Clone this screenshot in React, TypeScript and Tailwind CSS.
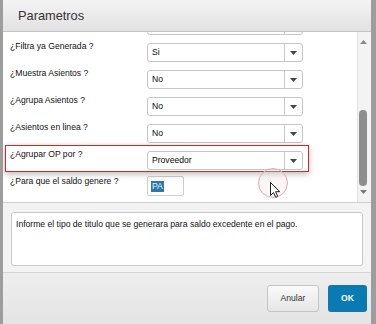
const rows = [
  { label: '', value: '' },
  { label: '¿Filtra ya Generada ?', value: 'Si' },
  { label: '¿Muestra Asientos ?', value: 'No' },
  { label: '¿Agrupa Asientos ?', value: 'No' },
  { label: '¿Asientos en linea ?', value: 'No' },
  { label: '¿Agrupar OP por ?', value: 'Proveedor', highlight: true },
];

function Caret({ up }: { up?: boolean }) {
  return (
    <svg width="7" height="4" viewBox="0 0 7 4">
      <path d={up ? 'M0 4h7L3.5 0z' : 'M0 0h7L3.5 4z'} fill="currentColor" />
    </svg>
  );
}

function SelectBox({ value }: { value: string }) {
  return (
    <div className="mt-[4px] flex h-[19px] w-[156px] items-center rounded-[3px] border border-[#c6c6c6] bg-white">
      <span className="flex-1 pl-[4px] text-[8.6px] leading-none text-[#0a0a0a]">{value}</span>
      <span className="flex h-full w-[18px] items-center justify-center border-l border-[#c9c9c9] text-[#454545]">
        <Caret />
      </span>
    </div>
  );
}

function Row({ label, value, highlight }: { label: string; value: string; highlight?: boolean }) {
  return (
    <div className="relative flex h-[27px] items-start">
      <div className="w-[144px] pl-[7px] pt-[2px] text-[8.6px] leading-[11px] text-[#111]">{label}</div>
      <SelectBox value={value} />
      {highlight && (
        <span className="pointer-events-none absolute -top-[2px] bottom-[2px] left-[2px] right-[48px] border-[1.5px] border-[#d8232a] shadow-[0_2px_6px_rgba(0,0,0,0.28)]" />
      )}
    </div>
  );
}

export default function App() {
  return (
    <div
      className="relative flex h-[324px] w-[376px] flex-col overflow-hidden border-l-[3px] border-r-[5px] border-[#9d9d9d] bg-white"
      style={{ fontFamily: '"Liberation Sans", Arial, sans-serif' }}
    >
      {/* title */}
      <div className="flex h-[32px] shrink-0 items-center border-b border-[#c3c3c3] bg-gradient-to-b from-[#f3f3f3] to-[#e2e2e2] pl-[15px]">
        <span className="text-[12.8px] text-[#333]">Parametros</span>
      </div>

      {/* scrolling params */}
      <div className="flex h-[170px] shrink-0">
        <div className="flex-1 overflow-hidden bg-white">
          <div className="-mt-[20px]">
            {rows.map((r, i) => (
              <Row key={i} label={r.label} value={r.value} highlight={r.highlight} />
            ))}
            <div className="flex h-[27px] items-start">
              <div className="w-[144px] pl-[7px] pt-[2px] text-[8.6px] leading-[11px] text-[#111]">
                ¿Para que el saldo genere ?
              </div>
              <div className="mt-[2px] flex h-[20px] w-[37px] items-center rounded-[2px] border border-[#cfcfcf] bg-white pl-[3px]">
                <span className="bg-[#2b78ad] px-[1px] text-[8.6px] leading-[11px] text-[#e9f3fa]">PA</span>
              </div>
            </div>
          </div>
        </div>
        <div className="flex w-[14px] flex-col border-l border-[#e2e2e2] bg-[#f3f3f3]">
          <div className="flex h-[12px] w-[9px] items-end justify-center pl-[1px] text-[#8a8a8a]">
            <Caret up />
          </div>
          <div className="flex flex-1 pb-[4px] pl-[1px] pt-[66px]">
            <div className="w-[8px] rounded-full bg-[#8e8e8e]" />
          </div>
          <div className="flex h-[12px] w-[9px] items-start justify-center pl-[1px] text-[#7a7a7a]">
            <Caret />
          </div>
        </div>
      </div>

      {/* description */}
      <div className="flex h-[70px] shrink-0 border-t border-[#cfcfcf] bg-[#f3f3f3] px-[8px] pb-[6px] pt-[9px]">
        <div className="flex-1 rounded-[3px] border border-[#c9c9c9] bg-white px-[4px] pt-[6px] text-[8.6px] leading-[11px] text-[#111]">
          Informe el tipo de titulo que se generara para saldo excedente en el pago.
        </div>
      </div>

      {/* footer */}
      <div className="flex flex-1 items-start justify-end gap-[9px] border-t border-[#d3d3d3] bg-gradient-to-b from-[#eeeeee] to-[#e4e4e4] pr-[4px] pt-[12px]">
        <button className="h-[27px] w-[52px] rounded-[3px] border border-[#c4c4c4] bg-gradient-to-b from-[#fafafa] to-[#e6e6e6] text-[8.6px] text-[#333]">
          Anular
        </button>
        <button className="h-[27px] w-[39px] rounded-[3px] bg-[#0a7bb2] text-[8.6px] font-bold text-white">
          OK
        </button>
      </div>

      {/* pointer highlight */}
      <span className="pointer-events-none absolute left-[255px] top-[168px] h-[30px] w-[30px] rounded-full border border-[#e4a9ab] bg-[#f6e4e4]/30" />
      <svg className="pointer-events-none absolute left-[267px] top-[182px]" width="11" height="16" viewBox="0 0 11 16">
        <path d="M0.5 0.5v13l3-3 2.2 4.8 2-0.9-2.1-4.7h4.2z" fill="#fff" stroke="#222" strokeWidth="1" strokeLinejoin="round" />
      </svg>
    </div>
  );
}
